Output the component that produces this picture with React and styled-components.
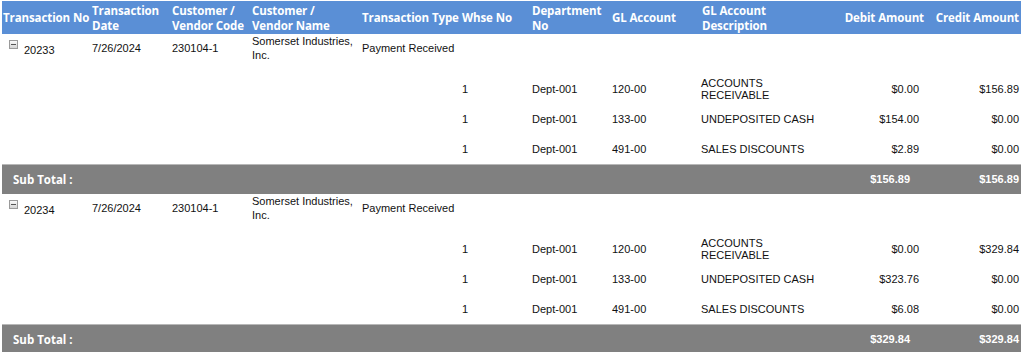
import React from 'react';
import styled, { createGlobalStyle } from 'styled-components';

const GlobalStyle = createGlobalStyle`
  body {
    margin: 0;
    background: #ffffff;
    font-family: "Liberation Sans", Arial, sans-serif;
  }
`;

// header titles break where the report breaks them
const columns = [
  { key: 'no', title: 'Transaction No', width: 88 },
  { key: 'date', title: 'Transaction\nDate', width: 80 },
  { key: 'code', title: 'Customer /\nVendor Code', width: 80 },
  { key: 'name', title: 'Customer /\nVendor Name', width: 110 },
  { key: 'type', title: 'Transaction Type', width: 100 },
  { key: 'whse', title: 'Whse No', width: 70 },
  { key: 'dept', title: 'Department\nNo', width: 80 },
  { key: 'gl', title: 'GL Account', width: 90 },
  { key: 'desc', title: 'GL Account\nDescription', width: 130 },
  { key: 'debit', title: 'Debit Amount', width: 96, right: true },
  { key: 'credit', title: 'Credit Amount', width: 95, right: true },
];

const transactions = [
  {
    no: '20233',
    date: '7/26/2024',
    code: '230104-1',
    name: 'Somerset Industries, Inc.',
    type: 'Payment Received',
    lines: [
      { whse: '1', dept: 'Dept-001', gl: '120-00', desc: 'ACCOUNTS RECEIVABLE', debit: '$0.00', credit: '$156.89' },
      { whse: '1', dept: 'Dept-001', gl: '133-00', desc: 'UNDEPOSITED CASH', debit: '$154.00', credit: '$0.00' },
      { whse: '1', dept: 'Dept-001', gl: '491-00', desc: 'SALES DISCOUNTS', debit: '$2.89', credit: '$0.00' },
    ],
    totalDebit: '$156.89',
    totalCredit: '$156.89',
  },
  {
    no: '20234',
    date: '7/26/2024',
    code: '230104-1',
    name: 'Somerset Industries, Inc.',
    type: 'Payment Received',
    lines: [
      { whse: '1', dept: 'Dept-001', gl: '120-00', desc: 'ACCOUNTS RECEIVABLE', debit: '$0.00', credit: '$329.84' },
      { whse: '1', dept: 'Dept-001', gl: '133-00', desc: 'UNDEPOSITED CASH', debit: '$323.76', credit: '$0.00' },
      { whse: '1', dept: 'Dept-001', gl: '491-00', desc: 'SALES DISCOUNTS', debit: '$6.08', credit: '$0.00' },
    ],
    totalDebit: '$329.84',
    totalCredit: '$329.84',
  },
];

function App() {
  return (
    <>
      <GlobalStyle />
      <Page>
        <Grid>
          <colgroup>
            {columns.map((c) => (
              <col key={c.key} style={{ width: c.width }} />
            ))}
          </colgroup>
          <thead>
            <HeadRow>
              {columns.map((c) => (
                <HeadCell key={c.key} $right={c.right}>
                  {c.title}
                </HeadCell>
              ))}
            </HeadRow>
          </thead>
          {transactions.map((t) => (
            <tbody key={t.no}>
              <GroupRow>
                <GroupCell>
                  <Expander />
                  {t.no}
                </GroupCell>
                <GroupCell>{t.date}</GroupCell>
                <GroupCell>{t.code}</GroupCell>
                <GroupCell>{t.name}</GroupCell>
                <GroupCell>{t.type}</GroupCell>
                <GroupCell colSpan={6} />
              </GroupRow>
              {t.lines.map((l) => (
                <LineRow key={l.gl}>
                  <Cell colSpan={5} />
                  <Cell>{l.whse}</Cell>
                  <Cell>{l.dept}</Cell>
                  <Cell>{l.gl}</Cell>
                  <Cell>{l.desc}</Cell>
                  <Cell $right $pr={7}>{l.debit}</Cell>
                  <Cell $right $pr={2}>{l.credit}</Cell>
                </LineRow>
              ))}
              <TotalRow>
                <TotalLabel colSpan={9}>Sub Total :</TotalLabel>
                <TotalAmount $pr={16}>{t.totalDebit}</TotalAmount>
                <TotalAmount $pr={2}>{t.totalCredit}</TotalAmount>
              </TotalRow>
            </tbody>
          ))}
        </Grid>
      </Page>
    </>
  );
}

const Page = styled.div`
  padding: 1px 3px 0 2px;
  width: 1019px;
`;

const Grid = styled.table`
  width: 1019px;
  table-layout: fixed;
  border-collapse: collapse;
  border-spacing: 0;
`;

const HeadRow = styled.tr`
  height: 33px;
  background: #5a8fd6;
`;

const HeadCell = styled.th`
  padding: 0 ${(p) => (p.$right ? '2px' : '0')} 0 ${(p) => (p.$right ? '0' : '2px')};
  font-family: "Open Sans", "Noto Sans", sans-serif;
  font-size: 11.5px;
  font-weight: 700;
  line-height: 15px;
  letter-spacing: -0.1px;
  color: #ffffff;
  text-align: ${(p) => (p.$right ? 'right' : 'left')};
  vertical-align: middle;
  white-space: pre;
  overflow: visible;
  &:first-child {
    padding-left: 1px;
  }
`;

const GroupRow = styled.tr`
  height: 40px;
`;

const GroupCell = styled.td`
  padding: 0 2px 12px 2px;
  font-size: 11px;
  line-height: 14px;
  color: #111111;
  vertical-align: middle;
  white-space: normal;
  &:first-child {
    padding-left: 7px;
  }
`;

const Expander = styled.span`
  position: relative;
  display: inline-block;
  width: 9px;
  height: 9px;
  margin: 0 6px 0 0;
  vertical-align: 5px;
  box-sizing: border-box;
  border: 1px solid #9a9a9a;
  background: linear-gradient(#fafafa, #d4d4d4);
  &::after {
    content: '';
    position: absolute;
    left: 1px;
    right: 1px;
    top: 3px;
    height: 1px;
    background: #555555;
  }
`;

const LineRow = styled.tr`
  height: 30px;
`;

const Cell = styled.td`
  padding: 0 ${(p) => (p.$pr !== undefined ? `${p.$pr}px` : '2px')} 0 2px;
  font-size: 11px;
  line-height: 12px;
  color: #111111;
  vertical-align: middle;
  text-align: ${(p) => (p.$right ? 'right' : 'left')};
  &:nth-child(5) {
    padding-left: 1px;
  }
`;

const TotalRow = styled.tr`
  height: 30px;
  background: #808080;
  border-top: 1px solid #b8b8b8;
`;

const TotalLabel = styled.td`
  padding: 0 0 0 11px;
  font-family: "Open Sans", "Noto Sans", sans-serif;
  font-size: 11.5px;
  font-weight: 700;
  color: #ffffff;
  vertical-align: middle;
`;

const TotalAmount = styled.td`
  padding: 0 ${(p) => p.$pr}px 0 0;
  font-size: 11px;
  font-weight: 700;
  color: #ffffff;
  text-align: right;
  vertical-align: middle;
`;

export default App;
